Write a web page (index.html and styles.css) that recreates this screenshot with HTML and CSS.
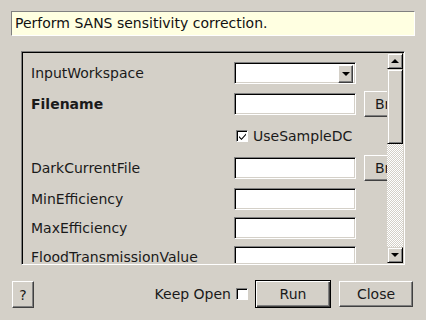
FILE: index.html
```html
<!DOCTYPE html>
<html lang="en">
<head>
    <meta charset="UTF-8">
    <title>SANSSensitivityCorrection</title>
    <link rel="stylesheet" href="styles.css">
</head>
<body>
<div class="desc">Perform SANS sensitivity correction.</div>
<div class="panel">
    <div class="content">
        <div class="row">
            <span class="label">InputWorkspace</span>
            <div class="combo"><div class="field"></div><div class="drop"><span class="arrow-down"></span></div></div>
        </div>
        <div class="row tall">
            <span class="label bold">Filename</span>
            <div class="edit"></div>
            <div class="btn browse">Browse</div>
        </div>
        <div class="row check-row">
            <span class="label"></span>
            <label class="check"><span class="box checked">
                <svg width="9" height="9" viewBox="0 0 9 9"><path d="M1 4 L3.5 6.5 L8 1.5 L8 3 L3.5 8 L1 5.5 Z" fill="#000"/></svg>
            </span>UseSampleDC</label>
        </div>
        <div class="row tall">
            <span class="label">DarkCurrentFile</span>
            <div class="edit"></div>
            <div class="btn browse">Browse</div>
        </div>
        <div class="row">
            <span class="label">MinEfficiency</span>
            <div class="edit"></div>
        </div>
        <div class="row">
            <span class="label">MaxEfficiency</span>
            <div class="edit"></div>
        </div>
        <div class="row">
            <span class="label">FloodTransmissionValue</span>
            <div class="edit"></div>
        </div>
    </div>
    <div class="scrollbar">
        <div class="sbtn"><span class="arrow-up"></span></div>
        <div class="thumb"></div>
        <div class="track"></div>
        <div class="sbtn"><span class="arrow-down"></span></div>
    </div>
</div>
<div class="footer">
    <div class="btn help">?</div>
    <div class="spacer"></div>
    <label class="keep">Keep Open <span class="box"></span></label>
    <div class="btn run">Run</div>
    <div class="btn close">Close</div>
</div>
</body>
</html>
```

FILE: styles.css
```css
*{
    margin: 0;
    padding: 0;
    box-sizing: border-box;
}
body{
    width: 426px;
    height: 320px;
    background: #d4d0c8;
    font-family: "DejaVu Sans", sans-serif;
    font-size: 14px;
    color: #000;
    overflow: hidden;
    padding-top: 11px;
}
.desc{
    margin-left: 11px;
    width: 404px;
    height: 25px;
    background: #ffffe1;
    border: 1px solid;
    border-color: #808080 #fff #fff #808080;
    padding-left: 3px;
    line-height: 22px;
    color: #111;
}
.panel{
    margin: 15px 0 0 21px;
    width: 384px;
    height: 214px;
    border: 1px solid;
    border-color: #808080 #fff #fff #808080;
    box-shadow: inset 1px 1px 0 #000;
    padding: 1px 1px 0 1px;
    display: flex;
}
.content{
    width: 365px;
    height: 210px;
    overflow: hidden;
    padding: 9px 0 0 8px;
    display: flex;
    flex-direction: column;
    gap: 7px;
}
.row{
    display: flex;
    align-items: center;
    height: 22px;
    flex: none;
    white-space: nowrap;
}
.row.tall{
    height: 26px;
}
.row.check-row{
    height: 24px;
}
.label{
    width: 203px;
    flex: none;
    color: #1a1a1a;
}
.bold{
    font-weight: bold;
}
.edit, .combo{
    width: 122px;
    height: 22px;
    flex: none;
    background: #fff;
    border: 1px solid;
    border-color: #808080 #fff #fff #808080;
    box-shadow: inset 1px 1px 0 #000, inset -1px -1px 0 #d4d0c8;
}
.combo{
    display: flex;
    justify-content: flex-end;
    padding: 2px;
}
.drop{
    width: 15px;
    height: 18px;
    background: #d4d0c8;
    border: 1px solid;
    border-color: #fff #404040 #404040 #fff;
    box-shadow: inset -1px -1px 0 #808080;
    display: flex;
    align-items: center;
    justify-content: center;
}
.arrow-down, .arrow-up{
    width: 0;
    height: 0;
    border-left: 4px solid transparent;
    border-right: 4px solid transparent;
}
.arrow-down{
    border-top: 4px solid #000;
}
.arrow-up{
    border-bottom: 4px solid #000;
}
.btn{
    background: #d4d0c8;
    border: 1px solid;
    border-color: #fff #404040 #404040 #fff;
    box-shadow: inset -1px -1px 0 #808080;
    display: flex;
    align-items: center;
    justify-content: center;
    color: #1a1a1a;
    flex: none;
}
.browse{
    margin-left: 8px;
    width: 70px;
    height: 26px;
    justify-content: flex-start;
    padding-left: 10px;
}
.check{
    display: flex;
    align-items: center;
    gap: 5px;
    color: #1a1a1a;
    padding-left: 2px;
}
.box{
    width: 12px;
    height: 12px;
    background: #fff;
    border: 1px solid;
    border-color: #808080 #fff #fff #808080;
    box-shadow: inset 1px 1px 0 #000;
    display: inline-flex;
    align-items: center;
    justify-content: center;
    padding: 1px 0 0 1px;
}
.scrollbar{
    width: 16px;
    height: 210px;
    display: flex;
    flex-direction: column;
}
.sbtn{
    height: 16px;
    background: #d4d0c8;
    border: 1px solid;
    border-color: #d4d0c8 #000 #000 #d4d0c8;
    box-shadow: inset 1px 1px 0 #fff, inset -1px -1px 0 #808080;
    display: flex;
    align-items: center;
    justify-content: center;
}
.thumb{
    height: 75px;
    background: #d4d0c8;
    border: 1px solid;
    border-color: #d4d0c8 #000 #000 #d4d0c8;
    box-shadow: inset 1px 1px 0 #fff, inset -1px -1px 0 #808080;
}
.track{
    flex: 1;
    background: repeating-conic-gradient(#fff 0 25%, #d4d0c8 0 50%) 0 0 / 2px 2px;
}
.footer{
    display: flex;
    align-items: center;
    margin-top: 15px;
    padding: 0 13px 0 12px;
    height: 28px;
}
.help{
    width: 22px;
    height: 27px;
    margin-top: 1px;
}
.spacer{
    flex: 1;
}
.keep{
    display: flex;
    align-items: center;
    gap: 5px;
    color: #1a1a1a;
    margin-right: 7px;
}
.run{
    width: 76px;
    height: 28px;
    border: 1px solid #000;
    box-shadow: inset 1px 1px 0 #fff, inset -1px -1px 0 #404040, inset -2px -2px 0 #808080;
}
.close{
    width: 74px;
    height: 26px;
    margin-left: 8px;
}
```
